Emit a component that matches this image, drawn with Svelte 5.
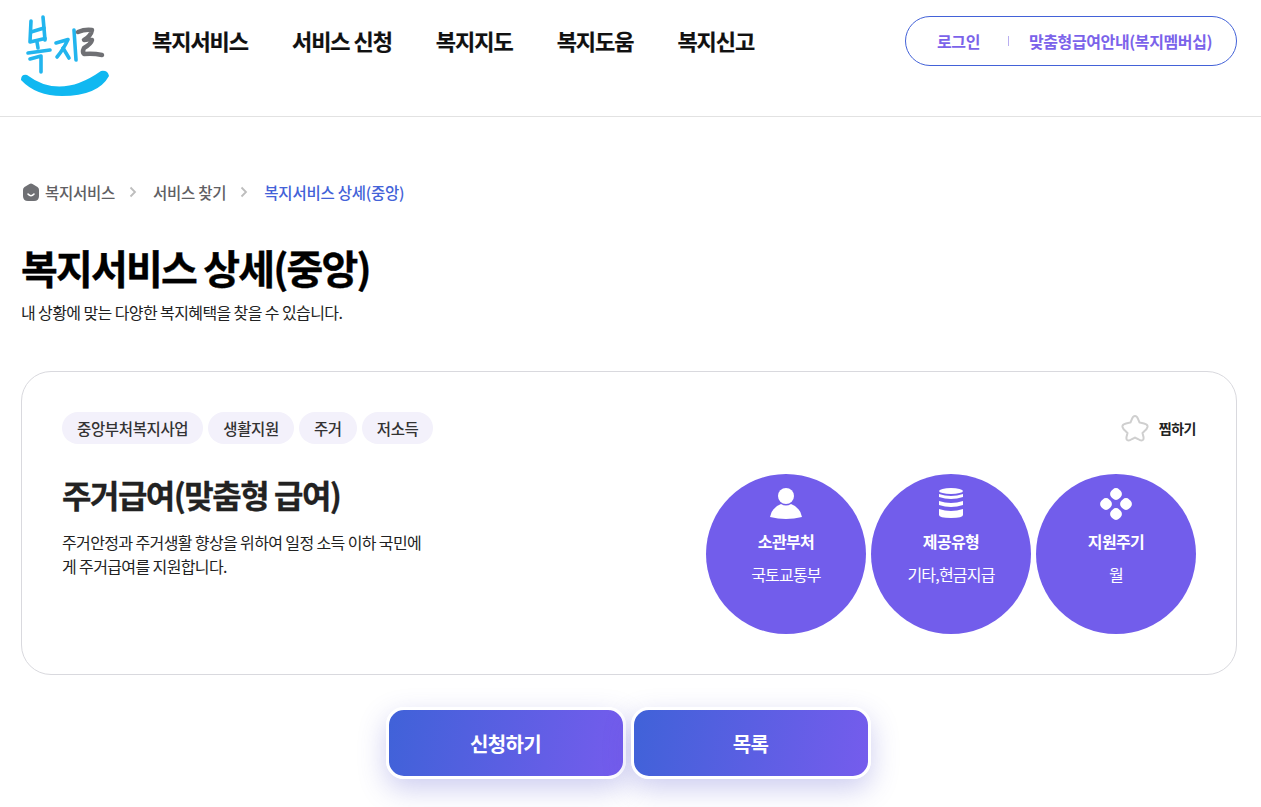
<script>
  const nav = ['복지서비스', '서비스 신청', '복지지도', '복지도움', '복지신고'];
  const tags = ['중앙부처복지사업', '생활지원', '주거', '저소득'];
</script>

<div class="page">
  <header class="header">
    <a class="logo" href="#top" aria-label="복지로">
      <svg width="90" height="82" viewBox="20 15 90 82" fill="none" stroke-linecap="round" stroke-linejoin="round">
        <g stroke="#22b5ee" stroke-width="3.600">
          <path d="M31 21 L30 42 L45 38.500" />
          <path d="M43 17 L45 40" />
          <path d="M31 32 L44 28" />
          <path d="M37 42 L38 48" />
          <path d="M28 53 L50 50" />
          <path d="M30 59 L41 56 L41 72" />
          <path d="M56 43 L68 39.500 Q63 50 57 57" />
          <path d="M63 48 L69 58" />
          <path d="M74 30 L76 60" />
        </g>
        <path d="M78 32 Q85 29 92 30 Q91 36 84 40 Q88 39 92 40 Q91 44 84 48 Q82 52 84 54 Q93 53 102 55" stroke="#6f7074" stroke-width="4.500" />
        <path d="M21 80 Q21 74 27 75 Q60 100 101 71 Q108 70 109 76 Q98 96 62 96 Q36 96 21 80 Z" fill="#10b8f1" />
      </svg>
    </a>
    <nav class="nav">
      {#each nav as item}
        <a href="#top">{item}</a>
      {/each}
    </nav>
    <div class="auth">
      <a href="#top">로그인</a>
      <span class="sep"></span>
      <a href="#top">맞춤형급여안내(복지멤버십)</a>
    </div>
  </header>

  <main class="main">
    <div class="crumbs">
      <svg class="home" width="18" height="18" viewBox="0 0 18 18">
        <path d="M7.500 1 Q9 0.200 10.500 1 L15.500 4 Q17 5 17 7 V13 Q17 18 12 18 H6 Q1 18 1 13 V7 Q1 5 2.500 4 Z" fill="#6f7074" />
        <path d="M6 11 Q9 14.500 12 11" fill="none" stroke="#fff" stroke-width="1.600" stroke-linecap="round" />
      </svg>
      <span>복지서비스</span>
      <svg class="chev" width="8" height="12" viewBox="0 0 8 12"><path d="M1.500 1.500 L6 6 L1.500 10.500" fill="none" stroke="#bdbdbd" stroke-width="1.800" /></svg>
      <span>서비스 찾기</span>
      <svg class="chev" width="8" height="12" viewBox="0 0 8 12"><path d="M1.500 1.500 L6 6 L1.500 10.500" fill="none" stroke="#bdbdbd" stroke-width="1.800" /></svg>
      <span class="current">복지서비스 상세(중앙)</span>
    </div>

    <h1>복지서비스 상세(중앙)</h1>
    <p class="lead">내 상황에 맞는 다양한 복지혜택을 찾을 수 있습니다.</p>

    <section class="card">
      <div class="card-top">
        <div class="tags">
          {#each tags as tag}
            <span class="tag">{tag}</span>
          {/each}
        </div>
        <button class="fav">
          <svg width="28" height="28" viewBox="0 0 28 28">
            <path d="M14 2 Q16 2 17 5 L18.500 8.500 L23 9.500 Q27 10.500 26.500 13 Q26 15 23.500 17 L21.500 19 L22.500 23 Q23 26.500 20.500 26.500 Q19 26.500 17 25 L14 23.500 L11 25 Q9 26.500 7.500 26.500 Q5 26.500 5.500 23 L6.500 19 L4.500 17 Q2 15 1.500 13 Q1 10.500 5 9.500 L9.500 8.500 L11 5 Q12 2 14 2 Z" fill="none" stroke="#cfcfcf" stroke-width="2" />
          </svg>
          <span>찜하기</span>
        </button>
      </div>
      <div class="card-body">
        <div class="summary">
          <h2>주거급여(맞춤형 급여)</h2>
          <p>주거안정과 주거생활 향상을 위하여 일정 소득 이하 국민에게 주거급여를 지원합니다.</p>
        </div>
        <div class="circles">
          <div class="circle">
            <svg width="34" height="34" viewBox="0 0 34 34" fill="#fff">
              <circle cx="17" cy="9" r="8" />
              <path d="M1 30 Q3 20 12 17 Q17 20 22 17 Q31 20 33 30 Q17 34 1 30 Z" />
            </svg>
            <strong>소관부처</strong>
            <span>국토교통부</span>
          </div>
          <div class="circle">
            <svg width="34" height="34" viewBox="0 0 34 34" fill="#fff">
              <ellipse cx="17" cy="4" rx="12" ry="3" />
              <path d="M5 7 Q17 11 29 7 V10 Q17 14 5 10 Z" />
              <path d="M5 14 Q17 18 29 14 V18 Q17 22 5 18 Z" />
              <path d="M5 22 Q17 26 29 22 V28 Q29 31 17 31 Q5 31 5 28 Z" />
            </svg>
            <strong>제공유형</strong>
            <span>기타,현금지급</span>
          </div>
          <div class="circle">
            <svg width="34" height="34" viewBox="0 0 34 34" fill="#fff">
              <rect x="11.500" y="1.500" width="11" height="11" rx="4.500" transform="rotate(45 17 7)" />
              <rect x="11.500" y="21.500" width="11" height="11" rx="4.500" transform="rotate(45 17 27)" />
              <rect x="1.500" y="11.500" width="11" height="11" rx="4.500" transform="rotate(45 7 17)" />
              <rect x="21.500" y="11.500" width="11" height="11" rx="4.500" transform="rotate(45 27 17)" />
            </svg>
            <strong>지원주기</strong>
            <span>월</span>
          </div>
        </div>
      </div>
    </section>

    <div class="actions">
      <button class="cta">신청하기</button>
      <button class="cta">목록</button>
    </div>
  </main>
</div>

<style>
  :global(body) {
    margin: 0;
    background: #fff;
    font-family: "Noto Sans CJK KR", "Noto Sans", sans-serif;
    color: #111;
    overflow: hidden;
  }
  a { color: inherit; text-decoration: none; }
  .page { height: 807px; overflow: hidden; }

  .header {
    display: flex;
    height: 116px;
    border-bottom: 1px solid #e2e2e2;
    padding: 0 24px 0 20px;
    align-items: flex-start;
  }
  .logo { display: block; width: 90px; height: 82px; margin-top: 15px; }
  .nav {
    display: flex;
    gap: 44px;
    margin-left: 42px;
    margin-top: 24px;
    font-size: 22px;
    font-weight: 700;
    letter-spacing: -1.050px;
    line-height: 32px;
    color: #111;
    -webkit-text-stroke: 0.2px #111;
  }
  .auth {
    margin-left: auto;
    margin-top: 16px;
    width: 332px;
    height: 50px;
    box-sizing: border-box;
    border: 1px solid #4362d8;
    border-radius: 25px;
    display: flex;
    align-items: center;
    padding-left: 31px;
    font-size: 16px;
    font-weight: 700;
    letter-spacing: -0.400px;
    color: #7b63ea;
  }
  .sep { width: 1px; height: 10px; background: #b9aef0; margin: 0 20px 0 28px; }

  .main { padding: 0 24px 0 21px; }
  .crumbs {
    display: flex;
    align-items: center;
    margin-top: 65px;
    height: 20px;
    font-size: 15.500px;
    font-weight: 500;
    letter-spacing: -0.250px;
    color: #5f6064;
  }
  .home { margin: 0 5px 0 1px; width: 18px; }
  .chev { margin: 0 16px 0 14px; }
  .current { color: #4362d8; }

  h1 {
    margin: 38px 0 0;
    font-size: 40px;
    line-height: 54px;
    font-weight: 700;
    letter-spacing: -1.800px;
    color: #000;
    -webkit-text-stroke: 0.4px #000;
  }
  .lead {
    margin: 6px 0 0;
    font-size: 16px;
    line-height: 24px;
    letter-spacing: -0.600px;
    color: #222;
  }

  .card {
    margin-top: 47px;
    height: 304px;
    box-sizing: border-box;
    border: 1px solid #d9d9de;
    border-radius: 30px;
    padding: 40px;
  }
  .card-top { display: flex; justify-content: space-between; align-items: center; height: 32px; }
  .tags { display: flex; gap: 5px; }
  .tag {
    height: 32px;
    padding: 0 15px;
    border-radius: 16px;
    background: #f3f1fb;
    font-size: 15.500px;
    font-weight: 500;
    line-height: 32px;
    letter-spacing: -0.350px;
    color: #333;
  }
  .fav {
    display: flex;
    align-items: center;
    gap: 10px;
    border: 0;
    background: none;
    padding: 0;
    font: inherit;
    font-size: 14px;
    font-weight: 700;
    letter-spacing: -0.500px;
    color: #222;
  }
  .card-body { display: flex; justify-content: space-between; margin-top: 30px; }
  .summary { width: 364px; }
  h2 {
    margin: -2px 0 0;
    font-size: 32px;
    line-height: 44px;
    font-weight: 700;
    letter-spacing: -1.500px;
    color: #222;
    -webkit-text-stroke: 0.3px #222;
  }
  .summary p {
    margin: 14px 0 0;
    font-size: 16px;
    line-height: 24px;
    letter-spacing: -0.620px;
    color: #222;
    word-break: break-all;
  }
  .circles { display: flex; gap: 5px; }
  .circle {
    width: 160px;
    height: 160px;
    border-radius: 50%;
    background: #725deb;
    color: #fff;
    display: flex;
    flex-direction: column;
    align-items: center;
    padding-top: 13px;
    box-sizing: border-box;
  }
  .circle strong { margin-top: 7px; font-size: 16px; line-height: 26px; font-weight: 700; letter-spacing: -0.650px; }
  .circle span { margin-top: 8px; font-size: 16px; line-height: 24px; letter-spacing: -0.800px; }

  .actions { display: flex; justify-content: center; gap: 5px; margin-top: 32px; margin-left: -2px; }
  .cta {
    width: 240px;
    height: 72px;
    box-sizing: border-box;
    border: 3px solid #fff;
    border-radius: 18px;
    background: linear-gradient(100deg, #3f62d8, #765ced) border-box;
    color: #fff;
    font: inherit;
    font-size: 20px;
    font-weight: 700;
    letter-spacing: -0.700px;
    box-shadow: 0 10px 28px rgba(70, 70, 200, 0.27);
  }
</style>
